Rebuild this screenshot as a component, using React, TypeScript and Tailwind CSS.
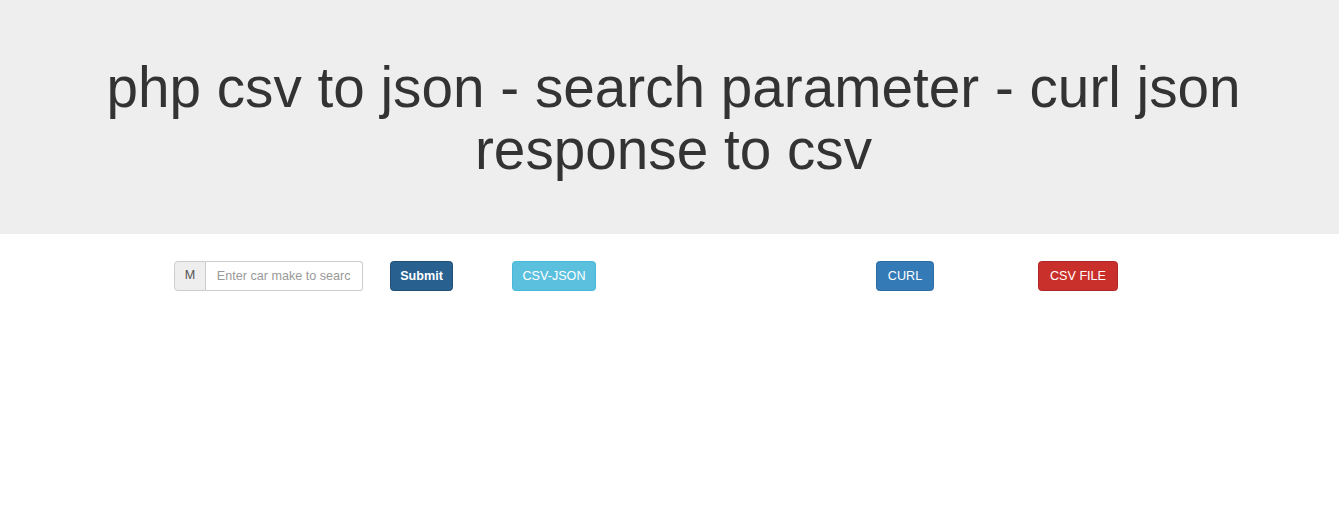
import React from 'react';

const btn =
  'flex items-center justify-center h-[30px] rounded-[3.6px] border text-[12.6px] leading-[18px] text-white whitespace-nowrap';

export default function App() {
  return (
    <div className="min-h-screen bg-white text-[#333] font-['Liberation_Sans',Arial,sans-serif]">
      {/* Jumbotron */}
      <header className="bg-[#eeeeee] pt-[57px] pb-[52px] pl-[8px]">
        <h1 className="text-center text-[56.7px] leading-[62.4px] font-normal text-[#333]">
          php csv to json - search parameter - curl json
          <br />
          response to csv
        </h1>
      </header>

      {/* Controls */}
      <div className="flex items-start pt-[27px] pl-[174px]">
        <div className="flex h-[30px] w-[189px]">
          <span className="flex items-center justify-center w-[32px] border border-[#ccc] bg-[#eee] rounded-l-[3.6px] text-[12.6px] text-[#555]">
            M
          </span>
          <input
            className="flex-1 min-w-0 border border-l-0 border-[#ccc] rounded-r-[3.6px] px-[10.8px] pt-[2px] text-[12.6px] text-[#555] placeholder:text-[#999] outline-none"
            placeholder="Enter car make to search"
          />
        </div>
        <button className={`${btn} w-[63px] ml-[27px] font-bold bg-[#286090] border-[#204d74]`}>Submit</button>
        <button className={`${btn} w-[84px] ml-[59px] bg-[#5bc0de] border-[#46b8da]`}>CSV-JSON</button>
        <button className={`${btn} w-[58px] ml-[280px] bg-[#337ab7] border-[#2e6da4]`}>CURL</button>
        <button className={`${btn} w-[80px] ml-[104px] bg-[#c9302c] border-[#ac2925]`}>CSV FILE</button>
      </div>
    </div>
  );
}
